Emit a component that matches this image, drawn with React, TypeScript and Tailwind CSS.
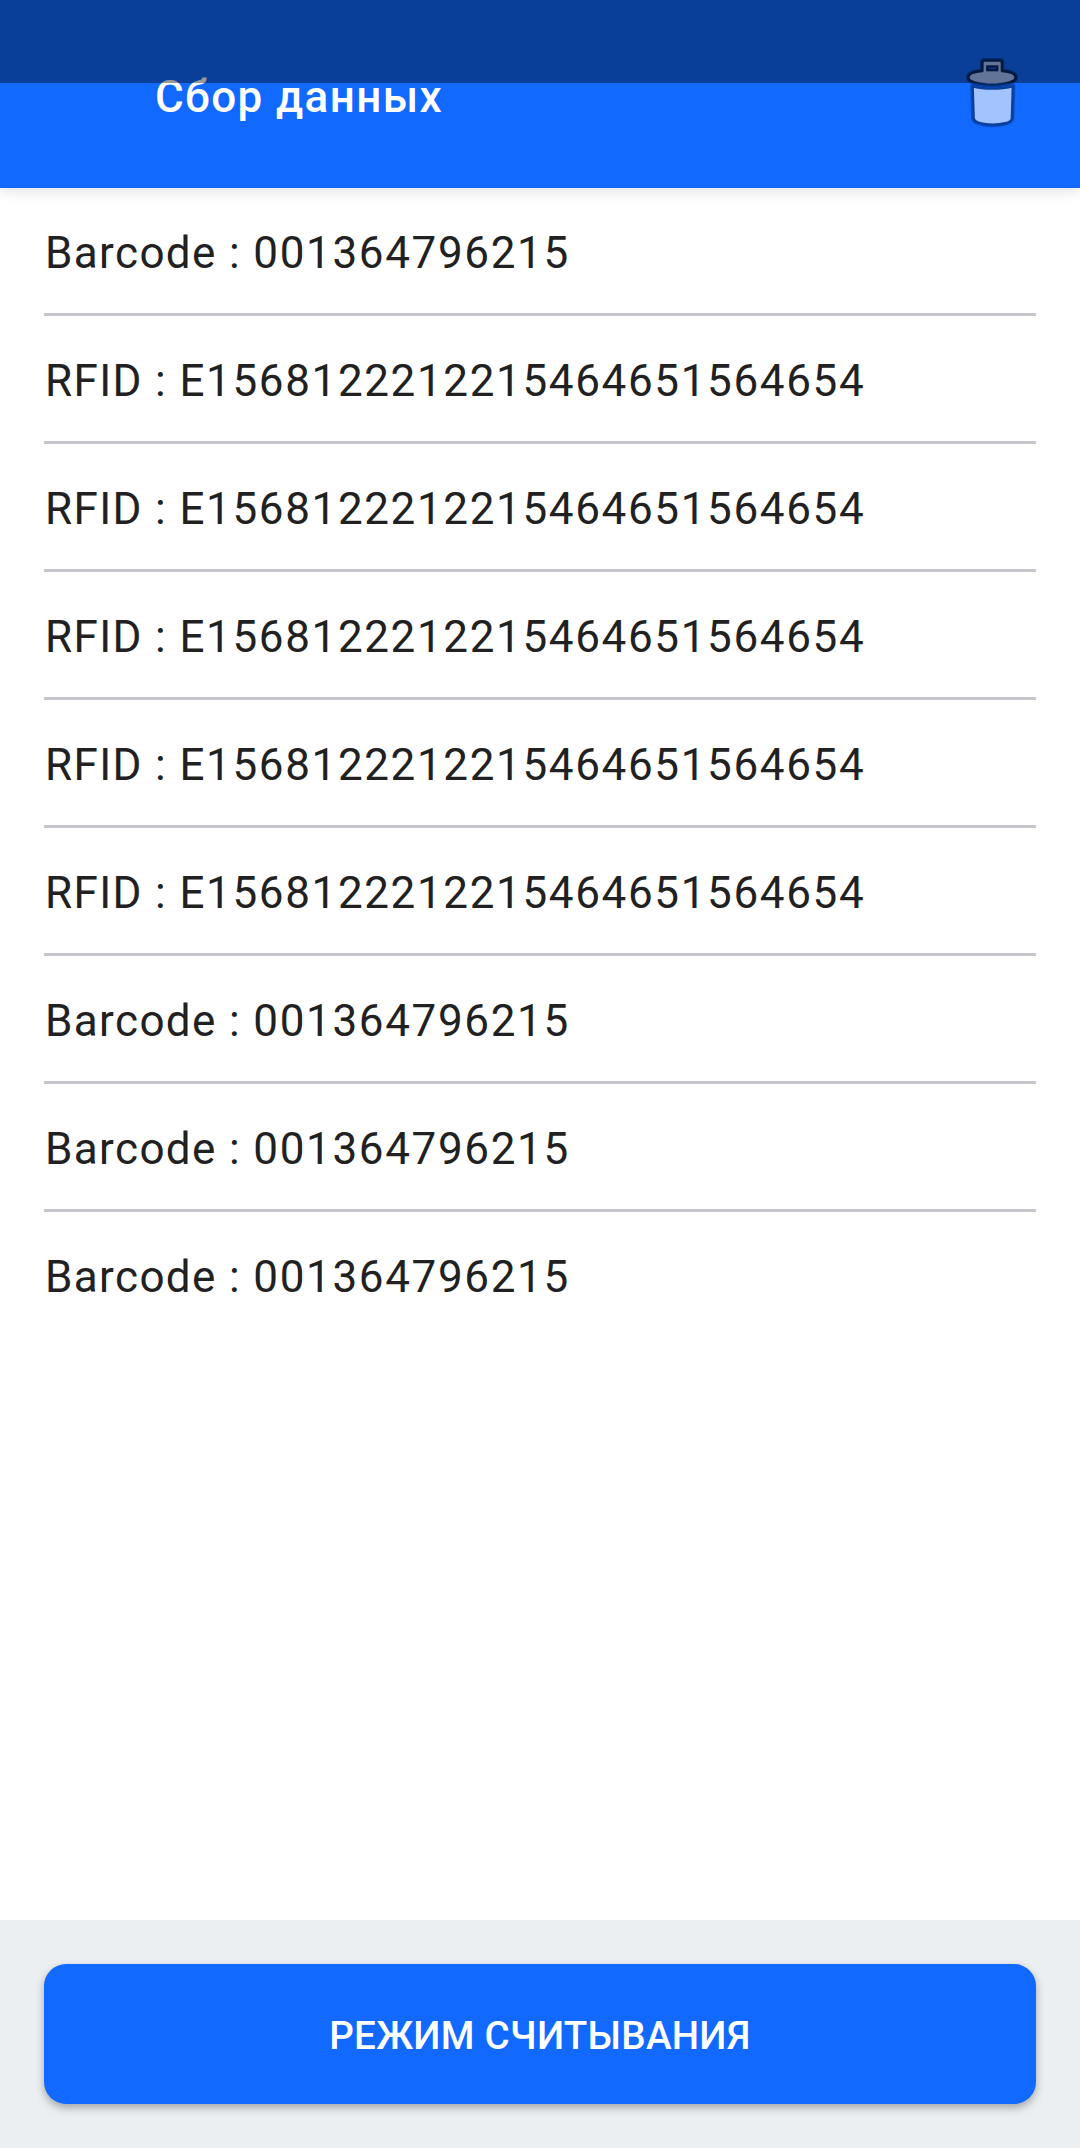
const items = [
  { kind: 'Barcode', code: '001364796215' },
  { kind: 'RFID', code: 'E1568122212215464651564654' },
  { kind: 'RFID', code: 'E1568122212215464651564654' },
  { kind: 'RFID', code: 'E1568122212215464651564654' },
  { kind: 'RFID', code: 'E1568122212215464651564654' },
  { kind: 'RFID', code: 'E1568122212215464651564654' },
  { kind: 'Barcode', code: '001364796215' },
  { kind: 'Barcode', code: '001364796215' },
  { kind: 'Barcode', code: '001364796215' },
];

const LID =
  'M34.300 29V20.500q0-2 2-2H52q2 0 2 2V29C63 29.600 67.700 31.800 67.700 35.500C67.700 40 57 42.600 44 42.600S20.300 40 20.300 35.500C20.300 31.800 25.300 29.600 34.300 29Z';
const BODY =
  'M24.700 44.300C35 47.500 53 47.500 64.800 44.300L63.800 76.500C63.500 80.800 53 82.700 44.500 82.700S26.200 80.800 25.700 76.500Z';

function TrashIcon() {
  return (
    <svg className="size-[88px]" viewBox="0 0 88 88" aria-hidden="true">
      <g stroke="#001550" strokeOpacity="0.35" strokeWidth="5" fill="none" strokeLinejoin="round">
        <path d={LID} />
        <path d={BODY} />
      </g>
      <g fill="#a3c3ff" strokeLinejoin="round">
        <path d={BODY} stroke="#0a3f9c" strokeWidth="2.300" />
        <path d={LID} stroke="#042a66" strokeWidth="2.600" />
      </g>
      <rect x="39.200" y="24.300" width="10.200" height="4" fill="#0c50c6" stroke="#05285f" strokeWidth="2" />
    </svg>
  );
}

export default function App() {
  return (
    <div className="relative flex h-[2148px] w-[1080px] flex-col bg-white font-[Roboto,sans-serif]">
      <div className="absolute inset-x-0 top-0 z-10 h-[83px] bg-[rgb(0_0_0/0.4)]" />
      <header className="flex h-[188px] shrink-0 items-start justify-between bg-[#1169ff] pr-11 pl-[155px] shadow-[0_2px_14px_rgba(0,0,0,0.14)]">
        <h1 className="mt-[71px] text-[44px] leading-[52px] font-medium tracking-[1.375px] text-white">Сбор данных</h1>
        <button className="mt-[42px]" aria-label="Удалить">
          <TrashIcon />
        </button>
      </header>
      <ul className="mx-11 flex-1">
        {items.map(({ kind, code }, i) => (
          <li
            key={i}
            className="flex h-[128px] items-center border-b-[3px] border-[#c6c6d0] pt-1 pl-px text-[44px] tracking-[1.375px] whitespace-pre text-[#212121] last:border-transparent"
          >
            {kind + ' : '}
            <span className="tracking-[1.64px]">{code}</span>
          </li>
        ))}
      </ul>
      <footer className="h-[228px] shrink-0 bg-[#ebeff2] px-11 pt-11">
        <button className="h-[140px] w-full rounded-[22px] bg-[#1169ff] pt-[3px] text-[38.5px] font-medium tracking-[0.3px] text-white shadow-[0_4px_8px_rgba(0,0,0,0.3)]">
          РЕЖИМ СЧИТЫВАНИЯ
        </button>
      </footer>
    </div>
  );
}
